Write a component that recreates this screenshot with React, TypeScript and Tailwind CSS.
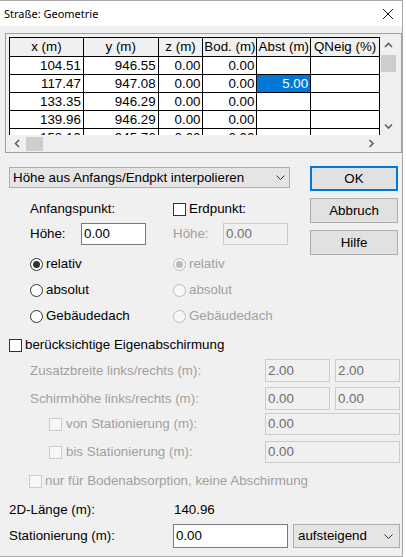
import type { ReactNode } from 'react'

const columns = ['x (m)', 'y (m)', 'z (m)', 'Bod. (m)', 'Abst (m)', 'QNeig (%)']
const colWidths = ['w-[75px] border-l', 'w-[75px]', 'w-[45px]', 'w-[54px]', 'w-[54px]', 'w-[69px]']

const points = [
  ['104.51', '946.55', '0.00', '0.00', '', ''],
  ['117.47', '947.08', '0.00', '0.00', '5.00', ''],
  ['133.35', '946.29', '0.00', '0.00', '', ''],
  ['139.96', '946.29', '0.00', '0.00', '', ''],
  ['153.10', '945.76', '0.00', '0.00', '', ''],
]

function Chevron({ dir, color = '#606060' }: { dir: 'up' | 'down' | 'left' | 'right'; color?: string }) {
  const d = {
    up: 'M1 5 L4.5 1.5 L8 5',
    down: 'M1 1.5 L4.5 5 L8 1.5',
    left: 'M5 1 L1.5 4.5 L5 8',
    right: 'M1.5 1 L5 4.5 L1.5 8',
  }[dir]
  const vertical = dir === 'up' || dir === 'down'
  return (
    <svg width={vertical ? 9 : 7} height={vertical ? 7 : 9} viewBox={vertical ? '0 0 9 7' : '0 0 7 9'}>
      <path d={d} stroke={color} strokeWidth="1.6" fill="none" />
    </svg>
  )
}

function ComboArrow() {
  return (
    <svg width="9" height="5" viewBox="0 0 9 5">
      <path d="M0.5 0.5 L4.5 4.5 L8.5 0.5" stroke="#333" strokeWidth="1" fill="none" />
    </svg>
  )
}

function Checkbox({ disabled }: { disabled?: boolean }) {
  return (
    <span
      className={
        'inline-block w-[13px] h-[13px] shrink-0 border ' +
        (disabled ? 'border-[#cccccc] bg-[#f7f7f7]' : 'border-[#333333] bg-white')
      }
    />
  )
}

function Radio({ checked, disabled }: { checked?: boolean; disabled?: boolean }) {
  return (
    <span
      className={
        'flex items-center justify-center w-[13px] h-[13px] shrink-0 rounded-full border ' +
        (disabled ? 'border-[#bcbcbc] bg-[#f7f7f7]' : 'border-[#333333] bg-white')
      }
    >
      {checked && (
        <span className={'w-[7px] h-[7px] rounded-full ' + (disabled ? 'bg-[#bcbcbc]' : 'bg-[#333333]')} />
      )}
    </span>
  )
}

function TextBox({ value, disabled, className = '' }: { value: string; disabled?: boolean; className?: string }) {
  return (
    <div
      className={
        'flex items-center pl-[2px] h-full border leading-none ' +
        (disabled ? 'border-[#cccccc] bg-[#f0f0f0] text-[#6d6d6d] ' : 'border-[#7a7a7a] bg-white text-black ') +
        className
      }
    >
      {value}
    </div>
  )
}

function Button({ children, primary }: { children: ReactNode; primary?: boolean }) {
  return (
    <div
      className={
        'flex items-center justify-center w-[88px] h-[25px] bg-[#e1e1e1] ' +
        (primary ? 'border-2 border-[#0078d7]' : 'border border-[#adadad]')
      }
    >
      {children}
    </div>
  )
}

function RadioRow({ label, checked, disabled }: { label: string; checked?: boolean; disabled?: boolean }) {
  return (
    <div className="flex items-center h-[26px] gap-[3px]">
      <Radio checked={checked} disabled={disabled} />
      <span className={disabled ? 'text-[#a0a0a0]' : ''}>{label}</span>
    </div>
  )
}

function PointGrid() {
  return (
    <div className="w-[397px] h-[120px] ml-[5px] mt-[7px] border border-[#a0a0a0] pt-[3px] pl-[3px]">
      <div className="flex h-[98px]">
        <div className="w-[371px] overflow-hidden bg-[#f0f0f0]">
          <div className="flex h-[20px] border-t border-black bg-[#f0f0f0]">
            {columns.map((c, i) => (
              <div key={c} className={'flex items-center justify-center border-r border-b border-black ' + colWidths[i]}>
                {c}
              </div>
            ))}
          </div>
          {points.map((row, r) => (
            <div key={r} className="flex h-[18px]">
              {row.map((v, i) => {
                const selected = r === 1 && i === 4
                return (
                  <div
                    key={i}
                    className={
                      'flex items-center justify-end pr-[2px] border-r border-b border-black ' +
                      colWidths[i] +
                      (selected ? ' bg-[#0078d7] text-white' : ' bg-white')
                    }
                  >
                    {v}
                  </div>
                )
              })}
            </div>
          ))}
        </div>
        <div className="w-[17px] flex flex-col items-center bg-[#f0f0f0]">
          <div className="h-[17px] flex items-center justify-center">
            <Chevron dir="up" />
          </div>
          <div className="w-[15px] h-[17px] mt-[1px] bg-[#cdcdcd]" />
          <div className="flex-1" />
          <div className="h-[17px] flex items-center justify-center">
            <Chevron dir="down" />
          </div>
        </div>
      </div>
      <div className="flex h-[17px] w-[388px]">
        <div className="w-[371px] flex items-center bg-[#f0f0f0]">
          <div className="w-[17px] flex justify-center">
            <Chevron dir="left" />
          </div>
          <div className="w-[17px] h-[14px] bg-[#cdcdcd]" />
          <div className="flex-1" />
          <div className="w-[17px] flex justify-center">
            <Chevron dir="right" />
          </div>
        </div>
      </div>
    </div>
  )
}

export default function App() {
  return (
    <div className="w-[406px] h-[557px] bg-white font-['Liberation_Sans',Arial,sans-serif] text-[13.33px] text-black leading-none">
      <div className="w-[403px] h-[557px] flex flex-col bg-[#f0f0f0] border-t border-r border-b border-[#aaaaaa]">
        {/* title bar */}
        <div className="h-[25px] shrink-0 bg-white flex items-center justify-between pl-[4px] pr-[8px]">
          <span className="text-[11px] font-['Noto_Sans',sans-serif]">Straße: Geometrie</span>
          <svg width="10" height="10" viewBox="0 0 10 10" className="mr-[1px]">
            <path d="M0 0 L10 10 M10 0 L0 10" stroke="#111" strokeWidth="1" />
          </svg>
        </div>

        <PointGrid />

        {/* height interpolation + dialog buttons */}
        <div className="flex mt-[13px]">
          <div className="w-[281px] ml-[9px] flex flex-col">
            <div className="mt-[1px] h-[21px] flex items-center justify-between pl-[3px] pr-[4px] bg-[#e5e5e5] border border-[#adadad]">
              <span>Höhe aus Anfangs/Endpkt interpolieren</span>
              <ComboArrow />
            </div>

            <div className="flex mt-[11px] pl-[21px]">
              <div className="w-[143px] flex flex-col">
                <div className="h-[20px] flex items-center">Anfangspunkt:</div>
                <div className="h-[22px] mt-[4px] flex items-center">
                  <span className="w-[51px]">Höhe:</span>
                  <TextBox value="0.00" className="w-[65px]" />
                </div>
                <div className="mt-[6px]">
                  <RadioRow label="relativ" checked />
                  <RadioRow label="absolut" />
                  <RadioRow label="Gebäudedach" />
                </div>
              </div>
              <div className="flex flex-col">
                <div className="h-[20px] flex items-center gap-[3px]">
                  <Checkbox />
                  <span>Erdpunkt:</span>
                </div>
                <div className="h-[22px] mt-[4px] flex items-center">
                  <span className="w-[50px] text-[#a0a0a0]">Höhe:</span>
                  <TextBox value="0.00" disabled className="w-[65px]" />
                </div>
                <div className="mt-[6px]">
                  <RadioRow label="relativ" checked disabled />
                  <RadioRow label="absolut" disabled />
                  <RadioRow label="Gebäudedach" disabled />
                </div>
              </div>
            </div>
          </div>

          <div className="ml-[20px] flex flex-col gap-[7px]">
            <Button primary>OK</Button>
            <Button>Abbruch</Button>
            <Button>Hilfe</Button>
          </div>
        </div>

        {/* own screening */}
        <div className="h-[20px] mt-[6px] ml-[9px] flex items-center gap-[3px]">
          <Checkbox />
          <span>berücksichtige Eigenabschirmung</span>
        </div>
        <div className="h-[23px] mt-[4px] pl-[30px] flex items-center">
          <span className="w-[235px] text-[#a0a0a0]">Zusatzbreite links/rechts (m):</span>
          <TextBox value="2.00" disabled className="w-[65px]" />
          <TextBox value="2.00" disabled className="w-[65px] ml-[5px]" />
        </div>
        <div className="h-[23px] mt-[5px] pl-[30px] flex items-center">
          <span className="w-[235px] text-[#a0a0a0]">Schirmhöhe links/rechts (m):</span>
          <TextBox value="0.00" disabled className="w-[65px]" />
          <TextBox value="0.00" disabled className="w-[65px] ml-[5px]" />
        </div>
        <div className="h-[22px] mt-[3px] pl-[49px] flex items-center">
          <Checkbox disabled />
          <span className="w-[199px] ml-[4px] text-[#a0a0a0]">von Stationierung (m):</span>
          <TextBox value="0.00" disabled className="w-[135px]" />
        </div>
        <div className="h-[22px] mt-[6px] pl-[49px] flex items-center">
          <Checkbox disabled />
          <span className="w-[199px] ml-[4px] text-[#a0a0a0]">bis Stationierung (m):</span>
          <TextBox value="0.00" disabled className="w-[135px]" />
        </div>
        <div className="h-[20px] mt-[8px] pl-[29px] flex items-center gap-[3px]">
          <Checkbox disabled />
          <span className="text-[#a0a0a0]">nur für Bodenabsorption, keine Abschirmung</span>
        </div>

        {/* length and stationing */}
        <div className="h-[20px] mt-[9px] pl-[9px] flex items-center">
          <span className="w-[165px]">2D-Länge (m):</span>
          <span>140.96</span>
        </div>
        <div className="h-[24px] mt-[4px] pl-[9px] flex items-center">
          <span className="w-[164px]">Stationierung (m):</span>
          <TextBox value="0.00" className="w-[115px]" />
          <div className="w-[107px] h-full ml-[5px] flex items-center justify-between pl-[4px] pr-[6px] bg-[#e5e5e5] border border-[#adadad]">
            <span>aufsteigend</span>
            <ComboArrow />
          </div>
        </div>
      </div>
    </div>
  )
}
